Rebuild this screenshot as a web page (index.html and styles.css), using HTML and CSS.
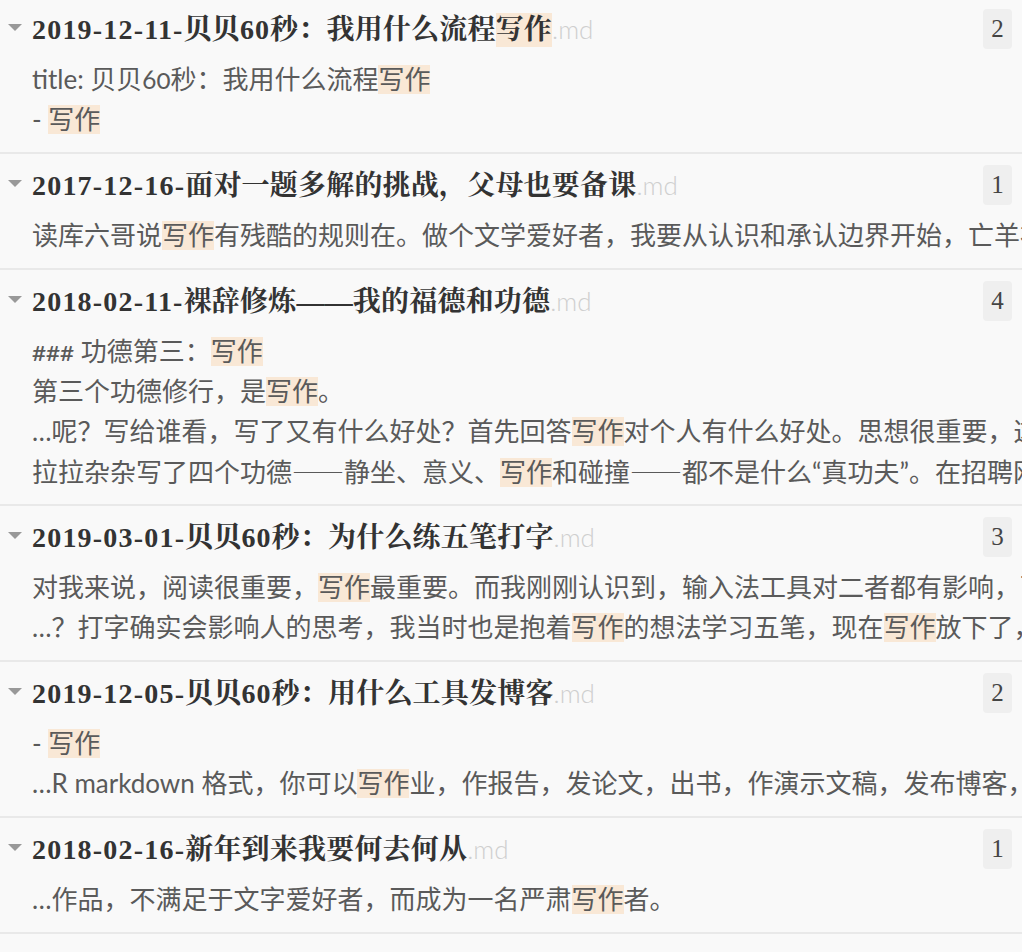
FILE: index.html
```html
<!DOCTYPE html>
<html lang="zh-CN">
<head>
<meta charset="utf-8">
<title>搜索结果</title>
<link rel="stylesheet" href="styles.css">
</head>
<body>
<div class="list">
  <section class="group">
    <div class="head">
      <span class="caret"></span>
      <span class="title"><span class="date">2019-12-11-</span>贝贝<span class="num">60</span>秒：我用什么流程<mark class="hl">写作</mark><span class="ext">.md</span></span>
      <span class="count">2</span>
    </div>
    <div class="matches">
      <div class="line">title: 贝贝60秒：我用什么流程<mark class="hl">写作</mark></div>
      <div class="line">- <mark class="hl">写作</mark></div>
    </div>
  </section>
  <section class="group">
    <div class="head">
      <span class="caret"></span>
      <span class="title"><span class="date">2017-12-16-</span>面对一题多解的挑战，父母也要备课<span class="ext">.md</span></span>
      <span class="count">1</span>
    </div>
    <div class="matches">
      <div class="line">读库六哥说<mark class="hl">写作</mark>有残酷的规则在。做个文学爱好者，我要从认识和承认边界开始，亡羊补牢，犹未晚也。</div>
    </div>
  </section>
  <section class="group">
    <div class="head">
      <span class="caret"></span>
      <span class="title"><span class="date">2018-02-11-</span>裸辞修炼——我的福德和功德<span class="ext">.md</span></span>
      <span class="count">4</span>
    </div>
    <div class="matches">
      <div class="line">### 功德第三：<mark class="hl">写作</mark></div>
      <div class="line">第三个功德修行，是<mark class="hl">写作</mark>。</div>
      <div class="line">…呢？写给谁看，写了又有什么好处？首先回答<mark class="hl">写作</mark>对个人有什么好处。思想很重要，这是毋庸置疑的。</div>
      <div class="line">拉拉杂杂写了四个功德<span class="cjk">——</span>静坐、意义、<mark class="hl">写作</mark>和碰撞<span class="cjk">——</span>都不是什么“真功夫”。在招聘网站上看不到。</div>
    </div>
  </section>
  <section class="group">
    <div class="head">
      <span class="caret"></span>
      <span class="title"><span class="date">2019-03-01-</span>贝贝<span class="num">60</span>秒：为什么练五笔打字<span class="ext">.md</span></span>
      <span class="count">3</span>
    </div>
    <div class="matches">
      <div class="line">对我来说，阅读很重要，<mark class="hl">写作</mark>最重要。而我刚刚认识到，输入法工具对二者都有影响，而且很大。</div>
      <div class="line">…？打字确实会影响人的思考，我当时也是抱着<mark class="hl">写作</mark>的想法学习五笔，现在<mark class="hl">写作</mark>放下了，五笔也忘了。</div>
    </div>
  </section>
  <section class="group">
    <div class="head">
      <span class="caret"></span>
      <span class="title"><span class="date">2019-12-05-</span>贝贝<span class="num">60</span>秒：用什么工具发博客<span class="ext">.md</span></span>
      <span class="count">2</span>
    </div>
    <div class="matches">
      <div class="line">- <mark class="hl">写作</mark></div>
      <div class="line">…R markdown 格式，你可以<mark class="hl">写作</mark>业，作报告，发论文，出书，作演示文稿，发布博客，建网站。</div>
    </div>
  </section>
  <section class="group">
    <div class="head">
      <span class="caret"></span>
      <span class="title"><span class="date">2018-02-16-</span>新年到来我要何去何从<span class="ext">.md</span></span>
      <span class="count">1</span>
    </div>
    <div class="matches">
      <div class="line">…作品，不满足于文字爱好者，而成为一名严肃<mark class="hl">写作</mark>者。</div>
    </div>
  </section>
</div>
</body>
</html>
```
FILE: styles.css
```css
html, body {
  margin: 0;
  padding: 0;
  background: #f9f9f9;
}

body {
  width: 1022px;
  height: 952px;
  overflow: hidden;
}

.list {
  margin-top: -2px;
}

.group {
  border-bottom: 2px solid #e9e9e9;
  padding: 10px 10px 13px 0;
}

.head {
  display: flex;
  align-items: center;
  height: 42px;
}

.caret {
  flex: none;
  width: 0;
  height: 0;
  margin: 0 10px 4px 8px;
  border-left: 7px solid transparent;
  border-right: 7px solid transparent;
  border-top: 7px solid #999;
}

.title {
  flex: 1;
  font-family: "Liberation Serif", "Noto Serif CJK SC", "Noto Sans CJK SC", serif;
  font-weight: bold;
  font-size: 28px;
  line-height: 42px;
  color: #333;
  white-space: nowrap;
  letter-spacing: 0.2px;
}

.date {
  letter-spacing: 1.2px;
}

.num {
  letter-spacing: 1px;
}

.ext {
  font-family: "Lato", "Open Sans", sans-serif;
  font-weight: 300;
  color: #cfcfcf;
  font-size: 26px;
  letter-spacing: 0;
}

.count {
  flex: none;
  width: 29px;
  height: 40px;
  border-radius: 4px;
  background: #efefef;
  color: #444;
  font-family: "Liberation Serif", serif;
  font-size: 25px;
  display: flex;
  align-items: center;
  justify-content: center;
}

.matches {
  margin-top: 9px;
  padding-left: 32px;
}

.line {
  font-family: "Lato", "Noto Sans CJK SC", sans-serif;
  font-size: 26px;
  line-height: 40px;
  height: 40px;
  color: #5a5a5a;
  white-space: nowrap;
  overflow: hidden;
  font-variant-numeric: oldstyle-nums;
  margin-right: -10px;
}

.cjk {
  font-family: "Noto Sans CJK SC", sans-serif;
}

.hl {
  background: #f9e8d6;
  color: inherit;
  display: inline-block;
  line-height: 29px;
}

.title .hl {
  line-height: 34px;
}
```
